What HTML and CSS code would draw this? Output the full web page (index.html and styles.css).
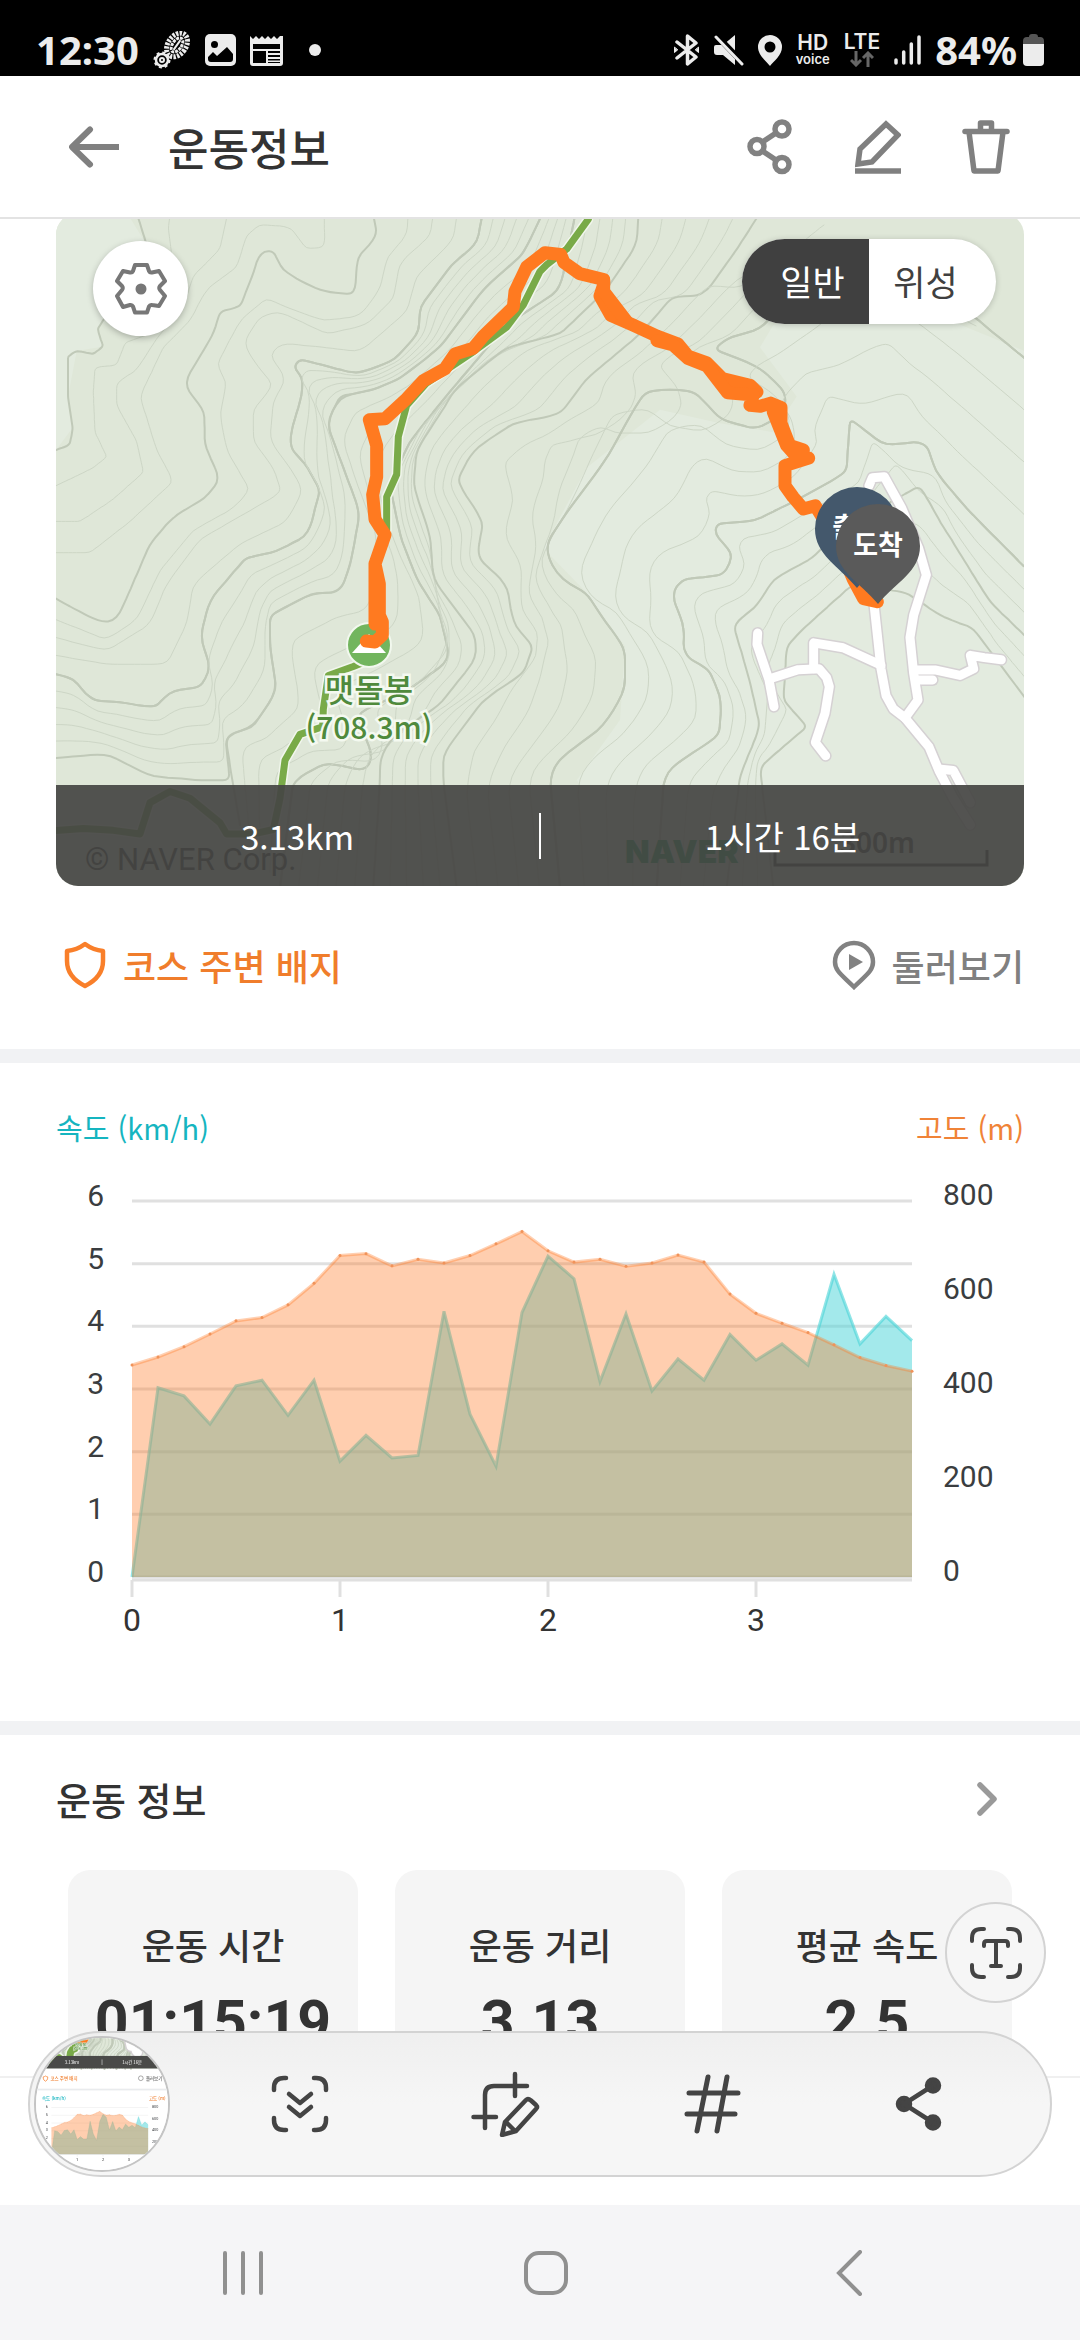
FILE: index.html
```html
<!DOCTYPE html>
<html lang="ko">
<head>
  <meta charset="UTF-8">
  <title>운동정보</title>
  <meta name="viewport" content="width=device-width, initial-scale=1.0">
  <link rel="stylesheet" href="styles.css">
</head>
<body>
  <div class="status">
    <span class="status-text">12:30</span>
    <svg width="38" height="38" viewBox="0 0 38 38" fill="none" stroke="#ececec">
      <g transform="rotate(35 24 14)">
        <ellipse cx="24" cy="14" rx="9" ry="13" stroke-width="5" stroke-dasharray="2.400 1.200"/>
        <ellipse cx="24" cy="14" rx="4.500" ry="8" stroke-width="3" stroke-dasharray="3 1"/>
        <path d="M24 8v12" stroke-width="2"/>
      </g>
      <circle cx="9" cy="29" r="6" stroke-width="2.500"/>
      <circle cx="9" cy="29" r="7.500" stroke-width="2" stroke-dasharray="3 2.900"/>
      <circle cx="9" cy="29" r="2" stroke-width="2"/>
    </svg>
    <svg width="31" height="32" viewBox="0 0 31 32">
      <rect width="31" height="32" rx="5" fill="#ececec"/>
      <circle cx="9.500" cy="10.500" r="3.500" fill="#000"/>
      <path d="M3 23l5-5 4 4 10-9 6 7v5q0 3-3 3H6q-3 0-3-3z" fill="#000"/>
    </svg>
    <svg width="33" height="31" viewBox="0 0 33 31">
      <path d="M0 1l3 3 3-3 3 3 3-3 3 3 3-3 3 3 3-3 3 3 3-3 3 0v27q0 3-3 3H3q-3 0-3-3z" fill="#ececec"/>
      <path d="M3 9h27v5H3zM3 16h13v12H3zM18 16h12v2H18zM18 20h12v2H18zM18 24h12v1.500H18zM18 27h12v1H18z" fill="#000"/>
    </svg>
    <svg class="status-dot" width="12" height="12" viewBox="0 0 12 12"><circle cx="6" cy="6" r="6" fill="#ececec"/></svg>
    <svg class="status-right" width="27" height="32" viewBox="0 0 27 32" fill="none" stroke="#ececec" stroke-width="3.500" stroke-linecap="round" stroke-linejoin="round">
      <path d="M4 8l19 15-8.500 7V2l8.500 7L4 24"/>
      <path d="M1.500 13.500v5l3-2.500zM25.500 13.500v5l-3-2.500z" fill="#ececec" stroke-width="1"/>
    </svg>
    <svg width="30" height="31" viewBox="0 0 30 31">
      <path d="M2 10h7L21 0v30L9 20H3q-3 0-3-3v-5q0-2 2-2z" fill="#ececec"/>
      <path d="M2 0l28 29" stroke="#000" stroke-width="6"/>
      <path d="M2 2l26 27" stroke="#ececec" stroke-width="3" stroke-linecap="round"/>
    </svg>
    <svg width="24" height="31" viewBox="0 0 24 31">
      <path fill-rule="evenodd" d="M12 0a12 12 0 0 1 12 12c0 8-8 14-12 19C8 26 0 20 0 12A12 12 0 0 1 12 0zm0 6.500a5.500 5.500 0 1 0 0 11 5.500 5.500 0 0 0 0-11z" fill="#ececec"/>
    </svg>
    <span class="hd"><b>HD</b><small>voice</small></span>
    <span class="lte"><b>LTE</b>
      <svg width="24" height="16" viewBox="0 0 24 16" fill="none" stroke="#666" stroke-width="3"><path d="M6 0v14M1 9l5 5 5-5M18 16V2M13 7l5-5 5 5"/></svg>
    </span>
    <svg width="27" height="30" viewBox="0 0 27 30" stroke="#ececec" stroke-width="3.500" stroke-linecap="round"><path d="M2 25v3M9.700 17v11M17.300 9v19M25 2v26"/></svg>
    <span class="status-text">84%</span>
    <svg class="battery" width="21" height="32" viewBox="0 0 21 32">
      <path d="M6 3q0-3 3-3h3q3 0 3 3h2q4 0 4 4v3H0V7q0-4 4-4z" fill="#555"/>
      <path d="M0 10h21v18q0 4-4 4H4q-4 0-4-4z" fill="#ececec"/>
    </svg>
  </div>

  <header class="header">
    <button class="icon-btn back" aria-label="뒤로">
      <svg width="50" height="42" viewBox="0 0 50 42" fill="none" stroke="#808080" stroke-width="6" stroke-linecap="round" stroke-linejoin="round"><path d="M21 3.500L3 21l18 17.500"/><path d="M4 21h46" stroke-linecap="butt"/></svg>
    </button>
    <h1>운동정보</h1>
    <button class="icon-btn" aria-label="공유">
      <svg width="46" height="56" viewBox="0 0 46 56" fill="none" stroke="#828282" stroke-width="5.500"><circle cx="35" cy="10" r="7"/><circle cx="10" cy="27.500" r="7"/><circle cx="35" cy="45.500" r="7"/><path d="M15.500 23L29 14M15.500 32L29 41"/></svg>
    </button>
    <button class="icon-btn" aria-label="편집">
      <svg width="46" height="54" viewBox="0 0 46 54" fill="none" stroke="#808080" stroke-width="5.500"><path d="M31 4l12 11-26 27-14 2 2-15z"/><path d="M0 51h46"/></svg>
    </button>
    <button class="icon-btn" aria-label="삭제">
      <svg width="48" height="54" viewBox="0 0 48 54" fill="none" stroke="#808080" stroke-width="5.500" stroke-linejoin="round"><path d="M3 11.500h42" stroke-linecap="round"/><path d="M18.500 11V3h11v8M7 12l5 39h24l5-39"/></svg>
    </button>
  </header>

  <main>
    <section class="map">
      <svg class="map-svg" viewBox="0 0 968 673">
        <g id="map">
          <rect width="968" height="673" fill="#dfe7d8"/>
          <g id="sheet" class="sheet" transform="translate(-16 -13) scale(.33333 .44643)">
            <path class="low" d="M48 40H270L320 100 250 200 172 290 190 328 110 338 84 440 98 510 48 560z"/>
            <path class="low" d="M1872 1540L1610 1300 1740 1165 1755 1000 1640 880 1510 780 1640 600 1860 470 2040 500 2200 520 2270 440 2160 330 2200 280 2500 200 2960 340V1540z"/>
            <g id="contours"></g>
            <g id="roads"></g>
            <path class="trail-edge" d="M1645 43L1580 110 1520 145 1500 160 1450 235 1400 285 1300 340 1160 410 1100 460 1075 530 1070 615 1040 665 1040 740M990 1030L940 1045 865 1065 850 1140 848 1180 780 1197 735 1255 720 1340 700 1410 640 1420 560 1420 540 1395 450 1340 390 1325 330 1350 300 1420 220 1412 130 1408 40 1413"/>
            <path class="trail" d="M1645 43L1580 110 1520 145 1500 160 1450 235 1400 285 1300 340 1160 410 1100 460 1075 530 1070 615 1040 665 1040 740M990 1030L940 1045 865 1065 850 1140 848 1180 780 1197 735 1255 720 1340 700 1410 640 1420 560 1420 540 1395 450 1340 390 1325 330 1350 300 1420 220 1412 130 1408 40 1413"/>
          </g>
          <circle cx="313" cy="432" r="22" fill="#72b55e" stroke="#f2f8ee" stroke-width="2"/>
          <path d="M313 421l17 19h-34z" fill="#fff"/>
          <g class="sheet" transform="translate(-16 -13) scale(.33333 .44643)">
            <path class="track" d="M979 988L1005 990 1027 975 1027 945 1018 930 1018 860 1005 815 1005 950M1005 815L1035 750 1005 715 998 660 1010 620 1010 550 988 492 1035 490 1100 445 1150 405 1215 378 1245 345 1300 332 1330 305 1420 240 1425 205 1460 150 1515 118 1562 122 1572 140 1619 165 1691 178 1691 190 1680 215 1712 258 1779 280 1851 305 1913 322 1944 350 2001 365 2047 400 2130 415 2151 430"/>
            <path class="track" d="M1691 180L1691 205 1760 272M1851 315L1900 325 1944 355 2001 372 2063 432 2140 437 2130 460 2161 462 2192 455 2223 465 2223 500 2249 550 2290 560M2200 475L2240 550 2270 575 2306 578 2235 595 2235 640 2259 665 2290 692 2326 685 2388 760 2440 850 2471 893 2512 900"/>
          </g>
          <g class="peak-name">
            <text x="313" y="489">맷돌봉</text>
            <text class="peak-height" x="313" y="526">(708.3m)</text>
          </g>
          <g class="pin">
            <path d="M801 274a42 42 0 0 1 42 42c0 26-24 37-42 59-18-22-42-33-42-59a42 42 0 0 1 42-42z" fill="#44586c"/>
            <text x="801" y="324">출발</text>
            <path d="M822 291a42 42 0 0 1 42 42c0 26-24 36-42 58-18-22-42-32-42-58a42 42 0 0 1 42-42z" fill="#5a5a5a"/>
            <text x="822" y="342">도착</text>
          </g>
          <text class="map-copy" x="29" y="657">© NAVER Corp.</text>
          <text class="map-logo" x="569" y="650">NAVER</text>
          <text class="map-scale" x="859" y="640">300m</text>
          <path d="M719 637v15h212v-15" fill="none" stroke="#222" stroke-width="3"/>
        </g>
      </svg>
      <button class="map-setting" aria-label="지도 설정">
        <svg width="52" height="52" viewBox="0 0 52 52" fill="none" stroke="#777" stroke-width="4" stroke-linejoin="round">
          <path d="M20 2h12l2 6q1 2 3 1.500l7-1.500 6 10-5 5q-1.500 2 0 4l5 6-6 10-7-1q-2-.500-3 1.500l-2 6H20l-2-6q-1-2-3-1.500L8 44 2 33l5-6q1.500-2 0-4l-5-5L8 8l7 1.500q2 .500 3-1.500z"/>
          <circle cx="26" cy="26" r="3.500" fill="#777"/>
        </svg>
      </button>
      <div class="map-type">
        <button class="on">일반</button>
        <button>위성</button>
      </div>
      <div class="map-summary">
        <span>3.13km</span>
        <span>1시간 16분</span>
      </div>
    </section>

    <nav class="links">
      <a href="#" class="badge-link">
        <svg width="44" height="48" viewBox="0 0 44 48" fill="none" stroke="#f97f2a" stroke-width="4.500" stroke-linejoin="round"><path d="M22 3q8 6 18 7v10q0 16-18 25Q4 36 4 20V10q10-1 18-7z"/></svg>
        코스 주변 배지
      </a>
      <a href="#" class="tour-link">
        <svg width="44" height="50" viewBox="0 0 44 50" fill="none" stroke="#828282" stroke-width="4.500"><path d="M22 3a19 19 0 0 1 19 19c0 9-7 13-19 25C10 35 3 31 3 22A19 19 0 0 1 22 3z"/><path d="M17 14v16l14-8z" fill="#828282" stroke="none"/></svg>
        둘러보기
      </a>
    </nav>

    <section class="chart">
      <div class="legend">
        <span class="speed">속도 (km/h)</span>
        <span class="elev">고도 (m)</span>
      </div>
      <svg class="chart-svg" viewBox="0 0 968 500"><g id="chart"></g></svg>
    </section>

    <section class="info">
      <a href="#" class="info-head">
        <h2>운동 정보</h2>
        <svg width="50" height="36" viewBox="0 0 50 36" fill="none" stroke="#9a9a9a" stroke-width="5.500" stroke-linecap="round" stroke-linejoin="round"><path d="M6 4l14 14L6 32"/></svg>
      </a>
      <div class="cards">
        <div class="card"><span>운동 시간</span><strong>01:15:19</strong></div>
        <div class="card"><span>운동 거리</span><strong>3.13</strong></div>
        <div class="card"><span>평균 속도</span><strong>2.5</strong></div>
      </div>
    </section>
  </main>

  <button class="text-scan" aria-label="텍스트 추출">
    <svg width="54" height="54" viewBox="0 0 54 54" fill="none" stroke="#444" stroke-width="4" stroke-linecap="round" stroke-linejoin="round">
      <path d="M3 15v-3q0-9 9-9h3M39 3h3q9 0 9 9v3M51 39v3q0 9-9 9h-3M15 51h-3q-9 0-9-9v-3M15 20v-2q0-3 3-3h18q3 0 3 3v2M27 15v25M22 40h10"/>
    </svg>
  </button>

  <div class="toolbar">
    <button class="thumb" aria-label="미리보기">
      <svg width="132" height="132" viewBox="0 0 132 132">
        <rect width="132" height="132" fill="#fff"/>
        <g transform="translate(6 -53) scale(.124)">
          <use href="#map"/>
          <rect y="572" width="968" height="101" fill="#4a4a48"/>
          <g class="mini-summary"><text x="242" y="634">3.13km</text><text x="726" y="634">1시간 16분</text></g>
          <path d="M484 600v45" stroke="#fff" stroke-width="4"/>
          <path d="M28 734q8 6 18 7v10q0 16-18 25-18-9-18-25v-10q10-1 18-7z" fill="none" stroke="#f97f2a" stroke-width="6"/>
          <circle cx="797" cy="752" r="19" fill="none" stroke="#777" stroke-width="5"/>
          <g class="mini-label"><text x="68" y="767" fill="#f07d2b">코스 주변 배지</text><text x="838" y="767" fill="#666">둘러보기</text><text x="0" y="928" fill="#15b5c0">속도 (km/h)</text><text x="862" y="928" fill="#f08337">고도 (m)</text></g>
          <rect x="-60" y="836" width="1090" height="14" fill="#e9ebed"/>
          <use href="#chart" y="934"/>
        </g>
      </svg>
    </button>
    <button aria-label="스크롤 캡처">
      <svg width="60" height="60" viewBox="0 0 60 60" fill="none" stroke="#444" stroke-width="4.500" stroke-linecap="round" stroke-linejoin="round"><path d="M4 16v-2Q4 4 14 4h2M44 4h2q10 0 10 10v2M56 44v2q0 10-10 10h-2M16 56h-2Q4 56 4 46v-2M19 20l11 9 11-9M19 33l11 9 11-9"/></svg>
    </button>
    <button aria-label="자르기">
      <svg width="70" height="66" viewBox="0 0 70 66" fill="none" stroke="#444" stroke-width="4.500" stroke-linecap="round" stroke-linejoin="round"><path d="M2.500 46H25M14 57V24q0-9 9-9h33M44 3v22M34 51l21-22q2-2 5 .500l5 4.500q2 2 0 4L45 60l-14 4zM35 51l9 9"/></svg>
    </button>
    <button aria-label="태그">
      <svg width="58" height="60" viewBox="0 0 58 60" fill="none" stroke="#444" stroke-width="5" stroke-linecap="round"><path d="M5 19h49M3 40h48M24 3L13 57M43 3L33 57"/></svg>
    </button>
    <button aria-label="공유">
      <svg width="50" height="56" viewBox="0 0 50 56" fill="#444" stroke="#444" stroke-width="4.500"><circle cx="39" cy="9.500" r="6"/><circle cx="10" cy="28" r="6"/><circle cx="39" cy="46.500" r="6"/><path d="M39 9.500L10 28l29 18.500" fill="none"/></svg>
    </button>
  </div>

  <div class="navbar">
    <button aria-label="최근 앱"><svg width="44" height="46" viewBox="0 0 44 46" stroke="#909090" stroke-width="4" stroke-linecap="round"><path d="M4 3v40M22 3v40M40 3v40"/></svg></button>
    <button aria-label="홈"><svg width="44" height="46" viewBox="0 0 44 46" fill="none" stroke="#909090" stroke-width="4"><rect x="2" y="3" width="40" height="40" rx="13"/></svg></button>
    <button aria-label="이전"><svg width="44" height="46" viewBox="0 0 44 46" fill="none" stroke="#909090" stroke-width="4" stroke-linecap="round"><path d="M33 2L12 23l21 21"/></svg></button>
  </div>

  <script src="script.js"></script>
</body>
</html>
```

FILE: styles.css
```css
* {
  box-sizing: border-box;
}
body {
  margin: 0;
  background: #fff;
  color: #333;
  font-family: "Noto Sans CJK KR", sans-serif;
}
button {
  display: flex;
  align-items: center;
  justify-content: center;
  padding: 0;
  border: none;
  background: none;
  color: inherit;
  font-family: inherit;
  cursor: pointer;
}
a {
  color: inherit;
  text-decoration: none;
}
svg {
  display: block;
  flex-shrink: 0;
}
h1, h2 {
  margin: 0;
  font-weight: 500;
}

/* 상태바 */
.status {
  display: flex;
  align-items: center;
  gap: 14px;
  height: 76px;
  padding: 24px 36px 0;
  background: #000;
  color: #ececec;
  font-family: "Noto Sans", sans-serif;
}
.status-text {
  font-size: 40px;
  line-height: 48px;
  font-weight: 700;
}
.status-dot {
  margin-left: 12px;
}
.status-right {
  margin-left: auto;
}
.hd, .lte {
  display: flex;
  flex-direction: column;
  align-items: center;
  font-family: Inter, sans-serif;
}
.hd b, .lte b {
  font-size: 21px;
  line-height: 18px;
  font-weight: 600;
}
.hd small {
  font-size: 13px;
  line-height: 14px;
  font-weight: 600;
}
.battery {
  margin-left: -8px;
}

/* 헤더 */
.header {
  position: sticky;
  top: 0;
  z-index: 2;
  display: flex;
  align-items: center;
  height: 143px;
  padding: 0 40px;
  border-bottom: 2px solid #e3e3e3;
  background: #fff;
}
.header h1 {
  flex: 1;
  margin-left: 20px;
  font-size: 44px;
  line-height: 64px;
}
.icon-btn {
  width: 108px;
  height: 108px;
}

/* 지도 */
.map {
  position: relative;
  margin: -6px 56px 0;
  border-radius: 22px;
  overflow: hidden;
}
.map-svg, .chart-svg {
  width: 100%;
  height: auto;
}
.sheet path {
  fill: none;
  stroke-linecap: round;
  stroke-linejoin: round;
  vector-effect: non-scaling-stroke;
}
.sheet .low {
  fill: #e3ebdf;
}
.sheet .minor {
  stroke: #cdd6c6;
  stroke-width: 1px;
}
.sheet .major {
  stroke: #c0c9b8;
  stroke-width: 2px;
}
.sheet .road-edge {
  stroke: #d5d1d3;
  stroke-width: 12px;
}
.sheet .road {
  stroke: #fff;
  stroke-width: 9px;
}
.sheet .trail-edge {
  stroke: #f1f6ec;
  stroke-width: 10px;
}
.sheet .trail {
  stroke: #79aa48;
  stroke-width: 7px;
}
.sheet .track {
  stroke: #ff7a20;
  stroke-width: 13px;
}
.peak-name {
  font-size: 32px;
  font-weight: 500;
  text-anchor: middle;
  fill: #4f8a3c;
  stroke: #f4f9f0;
  stroke-width: 5px;
  paint-order: stroke;
}
.peak-height {
  font-size: 30px;
}
.pin {
  font-size: 27px;
  font-weight: 700;
  text-anchor: middle;
}
.pin text {
  fill: #fff;
}
.map-copy {
  font-family: Roboto, sans-serif;
  font-size: 31px;
  fill: #222;
}
.map-logo {
  font-family: Inter, sans-serif;
  font-size: 32px;
  font-weight: 900;
  fill: #00a050;
}
.map-scale {
  font-family: "Noto Sans", sans-serif;
  font-size: 28px;
  font-weight: 600;
  text-anchor: end;
  fill: #222;
}
.map-setting {
  position: absolute;
  top: 28px;
  left: 37px;
  width: 95px;
  height: 95px;
  border-radius: 50%;
  background: #fff;
  box-shadow: 0 2px 6px rgba(0, 0, 0, .25);
}
.map-type {
  position: absolute;
  top: 26px;
  right: 28px;
  display: flex;
  border-radius: 43px;
  overflow: hidden;
  background: #fff;
  box-shadow: 0 1px 6px rgba(0, 0, 0, .2);
}
.map-type button {
  width: 127px;
  height: 85px;
  padding: 0 14px 3px 0;
  font-size: 35px;
  color: #404040;
}
.map-type .on {
  padding: 0 0 3px 14px;
  background: #404040;
  color: #fff;
}
.map-summary {
  position: absolute;
  right: 0;
  bottom: 0;
  left: 0;
  display: flex;
  align-items: center;
  height: 101px;
  background: rgba(70, 70, 68, .93);
  color: #fff;
}
.map-summary span {
  flex: 1;
  font-size: 33px;
  line-height: 46px;
  text-align: center;
}
.map-summary span + span {
  border-left: 2px solid #fff;
}

.links {
  display: flex;
  justify-content: space-between;
  padding: 52px 56px 57px;
  font-size: 36px;
  line-height: 54px;
  font-weight: 500;
}
.links a {
  display: flex;
  align-items: center;
  gap: 16px;
}
.badge-link {
  padding-left: 7px;
  color: #f07d2b;
}
.tour-link {
  color: #808080;
}

/* 속도/고도 그래프 */
.chart {
  padding: 46px 56px 74px;
  border-top: 14px solid #f1f2f4;
}
.legend {
  display: flex;
  justify-content: space-between;
  padding-bottom: 2px;
  font-size: 29px;
  line-height: 36px;
}
.speed {
  color: #15b5c0;
}
.elev {
  color: #f08337;
}
.axis-label {
  font-family: Roboto, sans-serif;
  font-size: 30px;
  fill: #3a3d40;
}
.axis-label.x {
  font-size: 32px;
  fill: #333;
  text-anchor: middle;
}
.axis-label.left {
  text-anchor: end;
}

/* 운동 정보 */
.info {
  padding: 38px 56px 16px;
  border-top: 14px solid #f1f2f4;
  border-bottom: 2px solid #f0f0f0;
}
.info-head {
  display: flex;
  align-items: center;
  justify-content: space-between;
}
.info-head h2 {
  font-size: 38px;
  line-height: 52px;
}
.cards {
  display: flex;
  gap: 37px;
  margin: 45px 12px 0;
}
.card {
  flex: 1;
  padding: 51px 0 6px;
  border-radius: 22px;
  background: #f5f5f5;
  text-align: center;
}
.card span {
  display: block;
  font-size: 36px;
  line-height: 46px;
  font-weight: 500;
}
.card strong {
  display: block;
  margin-top: 23px;
  font-family: Roboto, sans-serif;
  font-size: 59px;
  line-height: 64px;
}

/* 캡처 도구 */
.text-scan {
  position: fixed;
  right: 34px;
  bottom: 337px;
  width: 101px;
  height: 101px;
  border: 2px solid #d3d3d3;
  border-radius: 50%;
  background: #f6f6f6;
}
.toolbar {
  position: fixed;
  right: 28px;
  bottom: 163px;
  left: 28px;
  display: flex;
  align-items: center;
  height: 146px;
  padding: 0 28px 0 4px;
  border: 2px solid #d3d3d3;
  border-radius: 73px;
  background: linear-gradient(#efefef, #f6f6f6 50%);
}
.toolbar button {
  flex: 1;
}
.toolbar .thumb {
  flex: none;
  width: 136px;
  height: 136px;
  margin-right: 27px;
  border: 2px solid #c4c4c4;
  border-radius: 50%;
  overflow: hidden;
}
.thumb .minor, .thumb .major {
  stroke-width: 1px;
  opacity: .2;
}
.mini-summary {
  font-size: 34px;
  text-anchor: middle;
  fill: #fff;
}
.mini-label {
  font-size: 36px;
  font-weight: 500;
}

.navbar {
  position: fixed;
  right: 0;
  bottom: 0;
  left: 0;
  display: flex;
  height: 135px;
  padding: 0 80px 0 92px;
  background: #f5f5f7;
}
.navbar button {
  flex: 1;
}
```

FILE: script.js
```js
const NS = 'http://www.w3.org/2000/svg';

function add(parent, tag, attrs, text) {
  const el = document.createElementNS(NS, tag);
  for (const key in attrs) el.setAttribute(key, attrs[key]);
  if (text !== undefined) el.textContent = text;
  parent.appendChild(el);
  return el;
}

// ---- 등고선 ----
// 서쪽 사면: 네 줄마다 굵은 선
const west = [
  '48,560 90,548 98,510 84,440 84,350 110,338 160,345 190,328 172,290 250,200 320,100 270,-20',
  '48,640 160,600 200,575 165,520 160,430 165,375 230,370 255,320 330,300 400,220 400,150 385,60 400,-20',
  '48,720 120,720 220,670 310,610 290,540 230,460 230,410 290,380 350,310 430,240 460,170 540,110 560,40 580,-20',
  '48,790 150,790 270,720 400,630 350,560 300,440 370,330 450,270 500,200 590,150 620,80 660,55 750,60 800,110 855,105 850,-20',
  '48,893 100,915 180,945 215,945 240,925 290,840 330,770 400,710 500,665 540,625 495,550 492,470 440,425 440,400 520,300 540,250 600,240 640,165 660,115 700,112 725,155 790,185 850,205 945,212 952,130 1012,80 985,-20',
  '48,940 200,985 290,940 360,830 460,740 580,690 630,650 560,560 540,480 560,410 530,370 600,270 680,220 740,240 850,270 960,260 1020,200 1040,130 1100,80 1110,-20',
  '48,980 200,1010 330,950 380,860 480,760 620,700 725,655 700,600 640,540 640,470 700,415 640,360 610,320 660,260 720,250 860,300 980,280 1060,220 1080,140 1170,80 1190,-20',
  '48,1020 200,1040 380,1040 440,950 460,860 600,770 740,720 790,650 750,600 690,540 700,450 740,400 690,350 720,320 850,330 960,340 1100,250 1130,170 1240,90 1260,-20',
  '48,1062 100,1070 150,1120 240,1125 345,1138 390,1100 490,1090 510,1040 480,980 510,895 620,800 700,790 805,750 840,650 800,595 750,555 752,520 785,440 790,400 760,375 772,355 850,370 950,390 1060,360 1135,300 1140,240 1240,140 1310,100 1340,-20'
];
const ridge = '48,1250 200,1240 330,1290 480,1300 570,1300 555,1200 640,1180 710,1100 690,1000 690,930 820,880 900,880 930,820 960,700 900,580 860,500 900,440 1000,425 1080,400 1200,330 1330,200 1450,120 1540,-20';
const peak = '600,1400 555,1200 640,1180 710,1100 690,1000 690,930 820,880 900,880 930,820 960,700 900,580 860,500 900,440 1000,425 1080,400 1200,330 1330,200 1450,120 1540,-20';
const slopes = [
  '720,1540 760,1300 860,1260 980,1280 1000,1250 950,1150 1100,1100 1230,1030 1200,930 1130,850 1080,750 1050,640 1110,540 1240,420 1400,280 1560,200 1620,-20',
  '1000,1540 1020,1300 1020,1250 1060,1200 1200,1130 1305,1030 1310,980 1260,930 1180,850 1170,750 1120,640 1130,560 1250,420 1400,330 1560,300 1700,200 1790,100 1800,-20',
  '1250,1540 1210,1300 1210,1240 1330,1120 1450,1060 1480,1000 1420,950 1400,860 1310,800 1330,720 1250,630 1300,560 1420,500 1560,480 1640,400 1800,300 1900,215 1990,215 2100,100 2200,-20',
  '1560,1540 1530,1300 1550,1255 1690,1180 1755,1100 1755,1000 1700,950 1640,880 1560,850 1510,780 1580,700 1700,580 1780,470 1820,425 1960,425 2040,490 2150,515 2230,480 2240,430 2150,370 2020,335 2060,310 2160,290 2350,130 2430,90 2600,150 2750,230 2960,358'
];
const valley = [
  '1850,1540 1872,1290 1913,1260 2037,1200 2045,1120 2006,1050 1929,1020 1934,960 1893,880 1924,850 2047,840 2084,800 2017,740 2027,725 2140,720 2275,670 2419,610 2430,490 2533,550 2657,540 2688,610 2791,700 2951,820',
  '2060,1540 2100,1290 2160,1180 2130,1080 2080,950 2150,910 2200,850 2320,800 2400,740 2640,640 2700,720 2850,900 2960,980',
  '2200,1540 2160,1270 2300,1180 2230,1120 2240,1000 2290,960 2380,900 2440,860 2600,880 2700,930 2800,960 2960,1120'
];

// 점 개수가 다른 선끼리 보간하려고 같은 간격으로 다시 나눔
function resample(str, n) {
  const pts = str.split(' ').map(p => p.split(',').map(Number));
  const dist = [0];
  for (let i = 1; i < pts.length; i++) {
    dist.push(dist[i - 1] + Math.hypot((pts[i][0] - pts[i - 1][0]) / 3, (pts[i][1] - pts[i - 1][1]) / 2.24));
  }
  const total = dist[dist.length - 1];
  const out = [];
  let k = 1;
  for (let i = 0; i <= n; i++) {
    const d = total * i / n;
    while (k < pts.length - 1 && dist[k] < d) k++;
    const t = (d - dist[k - 1]) / (dist[k] - dist[k - 1]);
    out.push([pts[k - 1][0] + (pts[k][0] - pts[k - 1][0]) * t, pts[k - 1][1] + (pts[k][1] - pts[k - 1][1]) * t]);
  }
  return out;
}

function curve(pts) {
  let d = 'M' + pts[0].map(Math.round);
  for (let i = 1; i < pts.length - 1; i++) {
    const mx = (pts[i][0] + pts[i + 1][0]) / 2;
    const my = (pts[i][1] + pts[i + 1][1]) / 2;
    d += 'Q' + pts[i].map(Math.round) + ' ' + Math.round(mx) + ',' + Math.round(my);
  }
  return d + 'L' + pts[pts.length - 1].map(Math.round);
}

const contours = document.getElementById('contours');
function drawContours(lines, steps, every) {
  const sets = lines.map(l => resample(l, 70));
  sets.forEach((set, i) => {
    add(contours, 'path', { class: i % every ? 'minor' : 'major', d: curve(set) });
    if (!sets[i + 1]) return;
    for (let s = 1; s <= steps; s++) {
      const t = s / (steps + 1);
      const mid = set.map((p, j) => [p[0] + (sets[i + 1][j][0] - p[0]) * t, p[1] + (sets[i + 1][j][1] - p[1]) * t]);
      add(contours, 'path', { class: 'minor', d: curve(mid) });
    }
  });
}
drawContours(west, 0, 4);
drawContours([west[8], ridge], 4, 1);
drawContours([peak, slopes[0]], 3, 1);
drawContours(slopes, 4, 1);
drawContours([slopes[3], valley[0]], 3, 1);
drawContours(valley, 2, 1);

// ---- 도로 ----
const roads = [
  'M2502 905L2523 1050 2538 1110 2560 1140 2595 1160 2667 1225 2698 1280 2740 1340 2791 1400',
  'M2487 640L2497 622 2533 620 2585 690 2636 780 2659 840 2621 930 2610 980 2621 1060 2634 1120 2595 1160',
  'M2153 970L2151 995 2187 1075 2202 1135',
  'M2192 1072L2275 1052 2337 1050 2360 1070 2368 1090 2355 1150 2326 1215 2357 1245',
  'M2321 1050L2321 992 2409 1003 2523 1042',
  'M2621 1053L2688 1053 2760 1065 2801 1050 2791 1020 2833 1025 2884 1030',
  'M2626 1075L2678 1075',
  'M2703 1275L2740 1278 2791 1350'
];
const roadLayer = document.getElementById('roads');
['road-edge', 'road'].forEach(cls => {
  roads.forEach(d => add(roadLayer, 'path', { class: cls, d }));
});

// ---- 그래프 ----
const elevation = [451, 468, 490, 517, 545, 552, 579, 625, 684, 688, 662, 676, 668, 684, 709, 735, 694, 670, 676, 661, 668, 685, 670, 602, 561, 540, 520, 494, 467, 450, 438];
const speed = [0, 3.02, 2.89, 2.44, 3.05, 3.14, 2.58, 3.14, 1.85, 2.26, 1.9, 1.94, 4.24, 2.6, 1.77, 4.22, 5.12, 4.76, 3.12, 4.2, 2.97, 3.48, 3.14, 3.87, 3.46, 3.72, 3.38, 4.83, 3.72, 4.16, 3.77];

const left = 76, right = 856, top_ = 54, base = 430;
const chart = document.getElementById('chart');

for (let v = 0; v <= 6; v++) {
  const y = base - (base - top_) * v / 6;
  add(chart, 'path', { d: `M${left} ${y}H${right}`, stroke: '#e0e0e0', 'stroke-width': 3 });
  add(chart, 'text', { class: 'axis-label left', x: 48, y: y + 5 }, v);
}
for (let v = 0; v <= 800; v += 200) {
  const y = base - (base - top_) * v / 800;
  add(chart, 'text', { class: 'axis-label', x: 887, y: y + 4 }, v);
}

function area(data, max, color, fill, line) {
  const pts = data.map((v, i) => [left + i * (right - left) / (data.length - 1), base - (base - top_) * v / max]);
  const d = 'M' + pts.map(p => p[0].toFixed(1) + ' ' + p[1].toFixed(1)).join('L');
  add(chart, 'path', { d: d + `V${base}H${left}z`, fill: color, 'fill-opacity': fill });
  add(chart, 'path', { d, fill: 'none', stroke: color, 'stroke-width': 3, 'stroke-opacity': line });
  return pts;
}
area(speed, 6, '#48d3d7', 0.5, 0.6);
area(elevation, 800, '#ff7721', 0.36, 0.35).forEach(p => {
  add(chart, 'circle', { cx: p[0], cy: p[1], r: 1.5, fill: '#f0935a' });
});

add(chart, 'path', { d: `M${left} 433H${right}`, stroke: '#e0e0e0', 'stroke-width': 3 });
for (let km = 0; km <= 3; km++) {
  const x = left + km * 208;
  add(chart, 'path', { d: `M${x} 433V450`, stroke: '#e0e0e0', 'stroke-width': 3 });
  add(chart, 'text', { class: 'axis-label x', x, y: 484 }, km);
}
```
